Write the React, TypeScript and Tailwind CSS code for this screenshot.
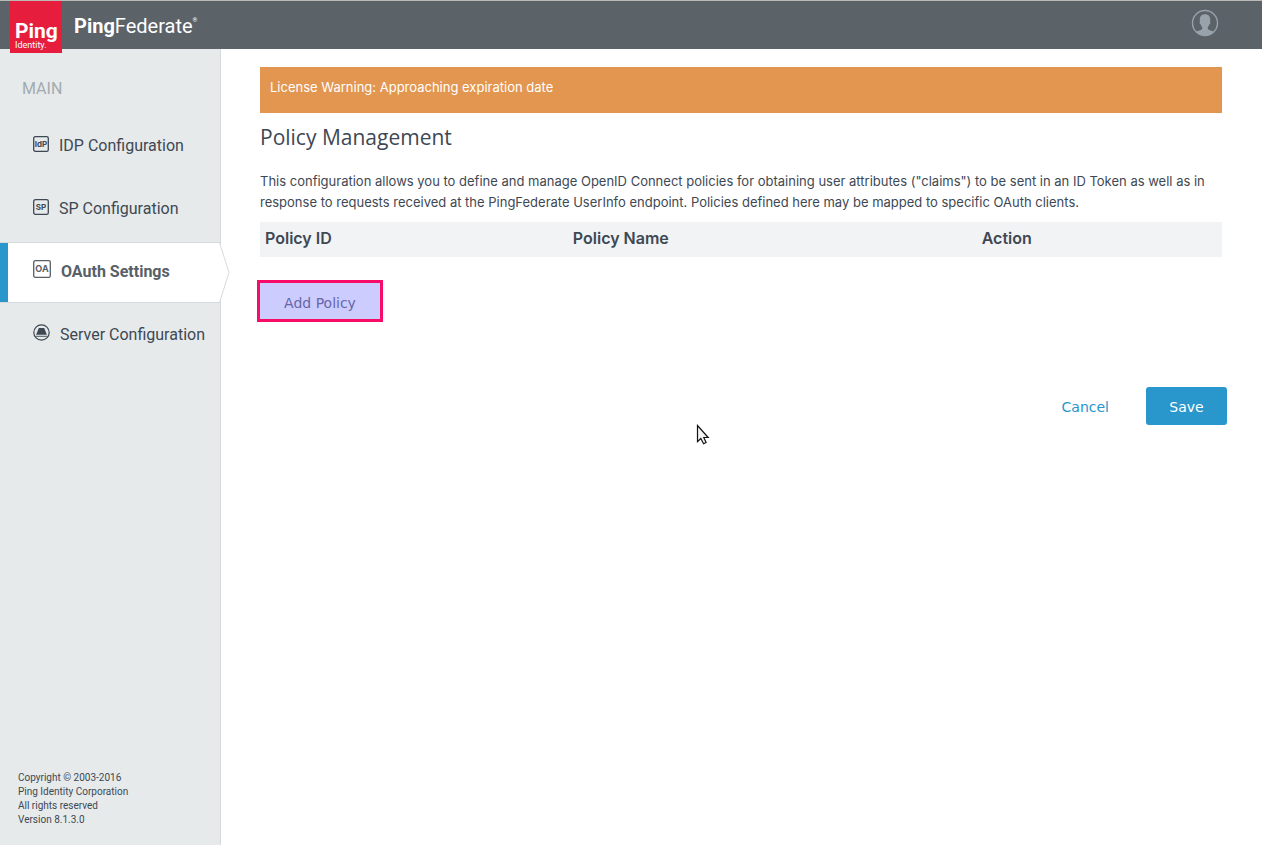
import type { ReactNode } from "react";

function BoxIcon({ label, size }: { label: string; size: number }) {
  return (
    <svg width={size} height={size} viewBox={`0 0 ${size} ${size}`} aria-hidden="true">
      <rect x="0.7" y="0.7" width={size - 1.4} height={size - 1.4} rx="1.6" fill="none" stroke="currentColor" strokeWidth="1.3" />
      <text
        x={size / 2}
        y={size / 2 + 3}
        textAnchor="middle"
        fontFamily="Inter, sans-serif"
        fontWeight="700"
        fontSize={size > 16 ? 9 : 8}
        fill="currentColor"
      >
        {label}
      </text>
    </svg>
  );
}

function ServerIcon() {
  return (
    <svg width="17" height="17" viewBox="0 0 17 17" aria-hidden="true">
      <circle cx="8.5" cy="8.5" r="7.7" fill="none" stroke="currentColor" strokeWidth="1.2" />
      <path d="M5.8 4h5.4l2.700 6.800H3.100z" fill="currentColor" />
      <path d="M3 12.300h11" stroke="currentColor" strokeWidth="0.9" />
    </svg>
  );
}

function UserIcon() {
  return (
    <svg width="28" height="28" viewBox="0 0 28 28" aria-hidden="true">
      <circle cx="14" cy="14" r="12.5" fill="none" stroke="#98a2ab" strokeWidth="1.4" />
      <path
        d="M14 5.2c3.400 0 5.200 2.100 5.200 5.200 0 .9-.1 1.500-.2 2 .7.200.6 2.400-.5 2.700-.3 1.500-1 2.400-1.700 3v1.700c.3 1.500 4 1.600 6.300 3.300A12.500 12.500 0 0 1 14 26.500a12.500 12.500 0 0 1-9.100-3.400c2.300-1.700 6-1.800 6.300-3.300v-1.700c-.7-.6-1.400-1.500-1.700-3-1.100-.3-1.200-2.500-.5-2.700-.1-.5-.2-1.100-.2-2 0-3.100 1.800-5.200 5.200-5.200z"
        fill="#98a2ab"
      />
    </svg>
  );
}

function NavItem({ icon, label, active = false }: { icon: ReactNode; label: string; active?: boolean }) {
  return (
    <li className="relative">
      <a
        href="#"
        aria-current={active ? "page" : undefined}
        className={
          active
            ? "flex h-[61px] items-center gap-2.5 border-y border-y-[#d6dadc] bg-[linear-gradient(to_right,#2996cc_8px,white_8px)] pl-[33px] font-bold text-[#575f67]"
            : "flex h-[61px] items-center gap-2.5 pl-[33px] text-[#3e4853]"
        }
      >
        <span className={active ? "shrink-0 pb-2" : "shrink-0 pb-1.5"}>{icon}</span>
        <span className="pb-0.5 whitespace-nowrap">{label}</span>
      </a>
      {active && (
        <svg className="absolute top-0 -right-[10px]" width="11" height="61" viewBox="0 0 11 61" aria-hidden="true">
          <path d="M0 1L1 1L10 30.500L1 60L0 60z" fill="#fff" />
          <path d="M0.500 0.500L10 30.500L0.500 60.500" fill="none" stroke="#d6dadc" />
        </svg>
      )}
    </li>
  );
}

export default function App() {
  return (
    <div className="relative flex min-h-screen flex-col bg-white font-['Inter',sans-serif] text-[#3e4853]">
      <header className="flex h-[49px] items-center justify-between border-t border-[#b9b9b5] bg-[#5b6268] pr-[43px] pl-2.5 font-['Roboto',sans-serif]">
        <div className="flex h-full items-start gap-3">
          <div className="relative z-10 flex h-[52px] w-[52px] flex-col justify-end bg-[#e61d3c] pb-[3px] pl-[5px] text-white">
            <span className="text-[21px] leading-5 font-bold">Ping</span>
            <span className="text-[9px] leading-[9px]">Identity.</span>
          </div>
          <div className="pt-2.5 text-[20px] leading-[30px] text-white">
            <span className="font-bold">Ping</span>Federate<sup className="align-super text-[6px]">®</sup>
          </div>
        </div>
        <button type="button" aria-label="Account" className="mb-1">
          <UserIcon />
        </button>
      </header>

      <div className="flex flex-1">
        <aside className="flex w-[221px] shrink-0 flex-col justify-between border-r border-[#d6dadc] bg-[#e6eaeb]">
          <nav aria-label="Main" className="pt-7 font-['Roboto',sans-serif] text-[16px]">
            <h2 className="pl-[22px] leading-6 text-[#a3aab0]">MAIN</h2>
            <ul className="flex flex-col gap-0.5 pt-[15px]">
              <NavItem icon={<BoxIcon label="IdP" size={16} />} label="IDP Configuration" />
              <NavItem icon={<BoxIcon label="SP" size={16} />} label="SP Configuration" />
              <NavItem icon={<BoxIcon label="OA" size={18} />} label="OAuth Settings" active />
              <NavItem icon={<ServerIcon />} label="Server Configuration" />
            </ul>
          </nav>
          <footer className="pb-[18px] pl-[18px] font-['Roboto',sans-serif] text-[10px] leading-[14px]">
            <p>Copyright © 2003-2016</p>
            <p>Ping Identity Corporation</p>
            <p>All rights reserved</p>
            <p>Version 8.1.3.0</p>
          </footer>
        </aside>

        <main className="min-w-0 flex-1 pt-[18px] pr-10 pl-[39px]">
          <div role="status" className="h-[46px] bg-[#e3964f] px-2.5 pt-2.5 text-[13px] leading-[21px] text-white">
            License Warning: Approaching expiration date
          </div>
          <h1 className="pt-2 font-['Open_Sans',sans-serif] text-[21px] leading-8">Policy Management</h1>
          <p className="pt-[18px] text-[13px] leading-[21px]">
            This configuration allows you to define and manage OpenID Connect policies for obtaining user attributes
            ("claims") to be sent in an ID Token as well as in
            <br />
            response to requests received at the PingFederate UserInfo endpoint. Policies defined here may be mapped to
            specific OAuth clients.
          </p>
          <table className="mt-[9px] w-full table-fixed bg-[#f1f3f5] text-left text-[16px]">
            <thead>
              <tr className="h-[35px]">
                <th className="w-[32%] px-[5px] pb-[3px] font-semibold">Policy ID</th>
                <th className="w-[42.5%] px-[5px] pb-[3px] font-semibold">Policy Name</th>
                <th className="px-[5px] pb-[3px] font-semibold">Action</th>
              </tr>
            </thead>
          </table>
          <button
            type="button"
            className="mt-[23px] -ml-[3px] block h-[42px] w-[126px] border-[3px] border-[#f70d68] bg-[#ccccff] pt-1 font-['DejaVu_Sans',sans-serif] text-[14px] text-[#6666a8]"
          >
            Add Policy
          </button>
          <div className="mt-[65px] -mr-[5px] flex items-center justify-end gap-[37px] font-['DejaVu_Sans',sans-serif] text-[14px]">
            <button type="button" className="pt-0.5 text-[#2996cc]">
              Cancel
            </button>
            <button type="button" className="h-[38px] w-[81px] rounded-[3px] bg-[#2996cc] pt-0.5 text-white">
              Save
            </button>
          </div>
        </main>
      </div>

      <svg className="pointer-events-none absolute top-[424px] left-[696px]" width="14" height="22" viewBox="0 0 14 22" aria-hidden="true">
        <path d="M1.500 1.500v16.200l3.300-3.200 2.800 5.300 2.500-1.300-2.300-5h4.400z" fill="#f4f4f4" stroke="#111" strokeWidth="1.200" />
      </svg>
    </div>
  );
}
